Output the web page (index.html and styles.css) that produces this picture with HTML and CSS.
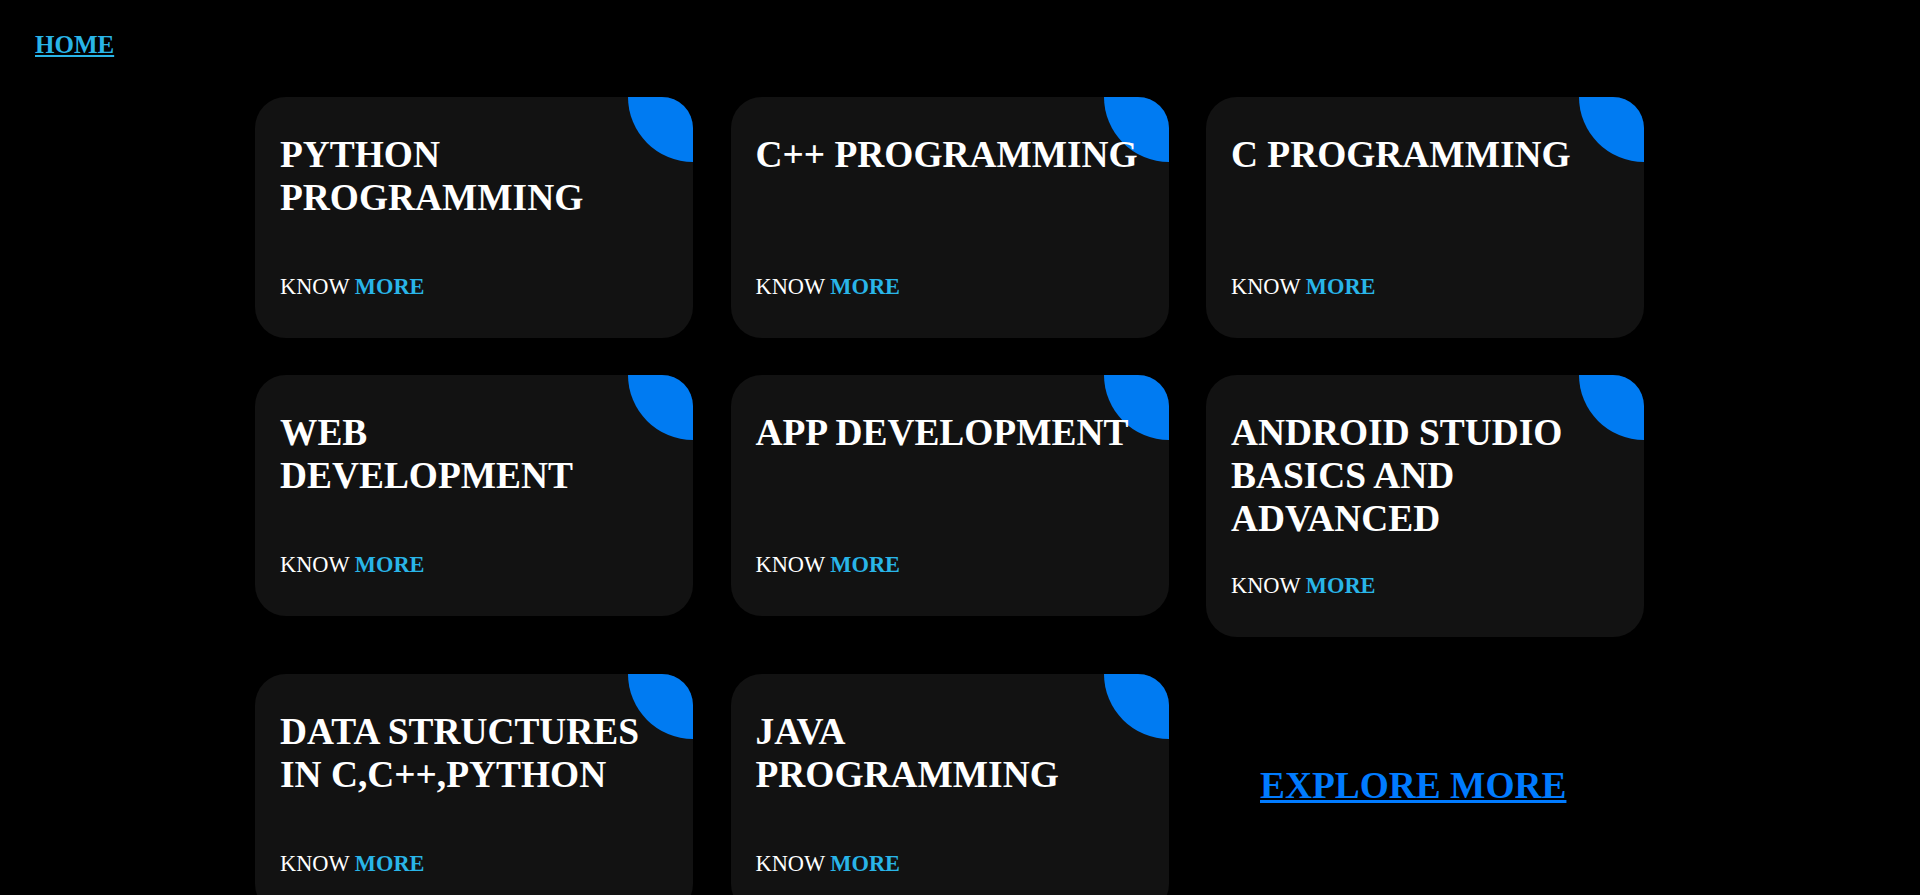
FILE: index.html
```html
<!DOCTYPE html>
<html lang="en">
<head>
<meta charset="utf-8">
<title>Courses</title>
<link rel="stylesheet" href="styles.css">
</head>
<body>
  <nav class="topnav">
    <a class="home-link" href="#">HOME</a>
  </nav>
  <main class="course-grid">
    <div class="card">
      <h2 class="card-title">PYTHON PROGRAMMING</h2>
      <p class="card-link">KNOW <a href="#">MORE</a></p>
    </div>
    <div class="card">
      <h2 class="card-title">C++ PROGRAMMING</h2>
      <p class="card-link">KNOW <a href="#">MORE</a></p>
    </div>
    <div class="card">
      <h2 class="card-title">C PROGRAMMING</h2>
      <p class="card-link">KNOW <a href="#">MORE</a></p>
    </div>
    <div class="card">
      <h2 class="card-title">WEB DEVELOPMENT</h2>
      <p class="card-link">KNOW <a href="#">MORE</a></p>
    </div>
    <div class="card">
      <h2 class="card-title">APP DEVELOPMENT</h2>
      <p class="card-link">KNOW <a href="#">MORE</a></p>
    </div>
    <div class="card">
      <h2 class="card-title">ANDROID STUDIO BASICS AND ADVANCED</h2>
      <p class="card-link">KNOW <a href="#">MORE</a></p>
    </div>
    <div class="card">
      <h2 class="card-title">DATA STRUCTURES IN C,C++,PYTHON</h2>
      <p class="card-link">KNOW <a href="#">MORE</a></p>
    </div>
    <div class="card">
      <h2 class="card-title">JAVA PROGRAMMING</h2>
      <p class="card-link">KNOW <a href="#">MORE</a></p>
    </div>
    <div class="explore">
      <a class="explore-link" href="#">EXPLORE MORE</a>
    </div>
  </main>
</body>
</html>
```

FILE: styles.css
```css
html, body {
  margin: 0;
  padding: 0;
  background: #000;
}

html::-webkit-scrollbar {
  width: 21px;
  background: #f1f1f1;
}

html::-webkit-scrollbar-track {
  background: #f1f1f1;
}

html::-webkit-scrollbar-thumb {
  background: #c1c1c1;
  border-left: 2px solid #f1f1f1;
  border-right: 2px solid #f1f1f1;
  background-clip: padding-box;
}

html::-webkit-scrollbar-button:single-button {
  height: 10px;
  background: #f1f1f1;
}

body {
  font-family: "Liberation Serif", "Times New Roman", serif;
  color: #fff;
}

.topnav {
  padding: 31px 0 0 35px;
  line-height: normal;
}

.home-link {
  font-size: 25px;
  font-weight: bold;
  color: #29b5e8;
  text-decoration: underline;
}

.course-grid {
  display: grid;
  grid-template-columns: repeat(3, 438px);
  column-gap: 37.5px;
  row-gap: 37.5px;
  align-items: start;
  width: 1389px;
  margin: 37.5px 0 0 255px;
  padding-bottom: 897px;
}

.card {
  position: relative;
  overflow: hidden;
  background: #121212;
  border-radius: 31px;
  padding: 36px 25px 38px 25px;
}

.card::before {
  content: "";
  position: absolute;
  top: -65px;
  right: -65px;
  width: 130px;
  height: 130px;
  border-radius: 50%;
  background: #007bf2;
}

.card-title {
  position: relative;
  margin: 0 0 32.5px 0;
  min-height: 108.7px;
  font-size: 37.4px;
  font-weight: bold;
  line-height: normal;
  color: #fff;
}

.card-link {
  position: relative;
  margin: 0;
  font-size: 22.4px;
  line-height: normal;
  color: #fff;
}

.card-link a {
  font-weight: bold;
  color: #29b5e8;
  text-decoration: none;
}

.explore {
  padding: 90px 0 0 54px;
}

.explore-link {
  font-size: 37.4px;
  font-weight: bold;
  line-height: normal;
  color: #007bff;
  text-decoration: underline;
}
```
